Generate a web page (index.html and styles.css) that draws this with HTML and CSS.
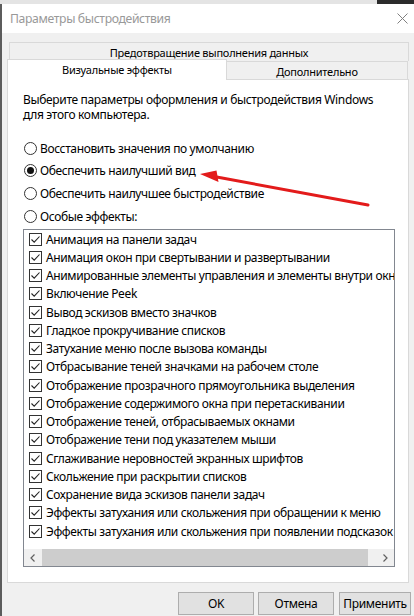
FILE: index.html
```html
<!DOCTYPE html>
<html lang="ru">
<head>
<meta charset="utf-8">
<title>Параметры быстродействия</title>
<link rel="stylesheet" href="styles.css">
</head>
<body>
<div class="screen">
  <div class="bg-strip"><span class="bg-dark"></span></div>
  <div class="window">
    <div class="titlebar">
      <span class="title">Параметры быстродействия</span>
      <svg class="close" width="11" height="11" viewBox="0 0 11 11"><path d="M0.5 0.5 L10.5 10.5 M10.5 0.5 L0.5 10.5" stroke="#808080" stroke-width="1" fill="none"/></svg>
    </div>
    <div class="content">
      <div class="tab-row back">
        <div class="tab back-tab">Предотвращение выполнения данных</div>
      </div>
      <div class="tab-row front">
        <div class="tab selected">Визуальные эффекты</div>
        <div class="tab other">Дополнительно</div>
      </div>
      <div class="panel">
        <p class="desc">Выберите параметры оформления и быстродействия Windows<br>для этого компьютера.</p>
        <div class="radios">
          <div class="radio-row"><span class="radio"></span><span>Восстановить значения по умолчанию</span></div>
          <div class="radio-row"><span class="radio on"></span><span>Обеспечить наилучший вид</span></div>
          <div class="radio-row"><span class="radio"></span><span>Обеспечить наилучшее быстродействие</span></div>
          <div class="radio-row"><span class="radio"></span><span>Особые эффекты:</span></div>
        </div>
        <div class="listbox">
          <div class="items">
            <div class="item"><span class="cb"></span><span>Анимация на панели задач</span></div>
            <div class="item"><span class="cb"></span><span>Анимация окон при свертывании и развертывании</span></div>
            <div class="item"><span class="cb"></span><span>Анимированные элементы управления и элементы внутри окна</span></div>
            <div class="item"><span class="cb"></span><span>Включение Peek</span></div>
            <div class="item"><span class="cb"></span><span>Вывод эскизов вместо значков</span></div>
            <div class="item"><span class="cb"></span><span>Гладкое прокручивание списков</span></div>
            <div class="item"><span class="cb"></span><span>Затухание меню после вызова команды</span></div>
            <div class="item"><span class="cb"></span><span>Отбрасывание теней значками на рабочем столе</span></div>
            <div class="item"><span class="cb"></span><span>Отображение прозрачного прямоугольника выделения</span></div>
            <div class="item"><span class="cb"></span><span>Отображение содержимого окна при перетаскивании</span></div>
            <div class="item"><span class="cb"></span><span>Отображение теней, отбрасываемых окнами</span></div>
            <div class="item"><span class="cb"></span><span>Отображение тени под указателем мыши</span></div>
            <div class="item"><span class="cb"></span><span>Сглаживание неровностей экранных шрифтов</span></div>
            <div class="item"><span class="cb"></span><span>Скольжение при раскрытии списков</span></div>
            <div class="item"><span class="cb"></span><span>Сохранение вида эскизов панели задач</span></div>
            <div class="item"><span class="cb"></span><span>Эффекты затухания или скольжения при обращении к меню</span></div>
            <div class="item"><span class="cb"></span><span>Эффекты затухания или скольжения при появлении подсказок</span></div>
          </div>
          <div class="hscroll">
            <span class="sbtn"><svg width="5" height="8" viewBox="0 0 5 8"><path d="M4.5 0.5 L1 4 L4.5 7.5" stroke="#606060" stroke-width="1.2" fill="none"/></svg></span>
            <span class="track"><span class="thumb"></span></span>
            <span class="sbtn"><svg width="5" height="8" viewBox="0 0 5 8"><path d="M0.5 0.5 L4 4 L0.5 7.5" stroke="#606060" stroke-width="1.2" fill="none"/></svg></span>
          </div>
        </div>
      </div>
      <div class="buttons">
        <button class="btn">OK</button>
        <button class="btn">Отмена</button>
        <button class="btn apply">Применить</button>
      </div>
    </div>
  </div>
  <svg class="arrow" width="414" height="616" viewBox="0 0 414 616">
    <line x1="368" y1="205" x2="214" y2="176.6" stroke="#e31b1b" stroke-width="3" stroke-linecap="round"/>
    <polygon points="200,174 216.5,170.5 218.5,182" fill="#e31b1b"/>
  </svg>
</div>
</body>
</html>
```
FILE: styles.css
```css
* { box-sizing: border-box; }
html, body { margin: 0; padding: 0; }
body {
  font-family: "Noto Sans", "Open Sans", sans-serif;
  font-size: 12px;
  letter-spacing: -0.37px;
  color: #000;
}
.screen {
  position: relative;
  width: 414px;
  height: 616px;
  overflow: hidden;
  background: #f0f0f0;
}
.bg-strip {
  height: 4px;
  background: #e4e4e4;
  display: flex;
  justify-content: flex-end;
}
.bg-dark { width: 37px; background: #2b2b2b; }
.window {
  height: 612px;
  border-left: 2px solid #5c5c5c;
  display: flex;
  flex-direction: column;
}
.titlebar {
  height: 29px;
  background: #fff;
  display: flex;
  align-items: center;
  justify-content: space-between;
  padding: 0 6px 0 8px;
}
.title {
  font-size: 12.2px;
  letter-spacing: -0.35px;
  color: #999;
}
.content {
  flex: 1;
  padding-top: 9px;
  display: flex;
  flex-direction: column;
}
.tab-row { display: flex; }
.tab {
  display: flex;
  align-items: center;
  justify-content: center;
  border: 1px solid #d9d9d9;
  background: #f0f0f0;
  white-space: nowrap;
  font-size: 11px;
  letter-spacing: -0.25px;
}
.back-tab {
  margin-left: 7px;
  width: 400px;
  height: 19px;
  border-bottom: none;
  padding-top: 1px;
}
.front {
  margin-top: -2px;
  height: 20px;
  align-items: flex-end;
  margin-left: 5px;
}
.selected {
  position: relative;
  z-index: 1;
  width: 220px;
  height: 21px;
  margin-bottom: -1px;
  background: #fff;
  border-bottom: none;
  padding-bottom: 2px;
}
.other {
  width: 181px;
  height: 18px;
  border-left: none;
  border-bottom: none;
  padding-top: 2px;
}
.panel {
  margin-left: 5px;
  width: 402px;
  height: 504px;
  background: #fff;
  border: 1px solid #d9d9d9;
  padding: 12px 0 0 15px;
}
.desc {
  margin: 0;
  line-height: 15px;
  letter-spacing: -0.34px;
}
.radios { margin-top: 15px; }
.radio-row {
  height: 22.65px;
  display: flex;
  align-items: center;
}
.radio {
  width: 13px;
  height: 13px;
  border: 1px solid #333;
  border-radius: 50%;
  margin: 0 3px 0 1px;
  display: flex;
  align-items: center;
  justify-content: center;
  flex: none;
}
.radio.on::after {
  content: "";
  width: 7px;
  height: 7px;
  border-radius: 50%;
  background: #111;
}
.listbox {
  margin-top: 1.5px;
  width: 372px;
  height: 338px;
  border: 1px solid #828790;
  display: flex;
  flex-direction: column;
}
.items {
  flex: 1;
  overflow: hidden;
  white-space: nowrap;
}
.item {
  height: 18.25px;
  display: flex;
  align-items: center;
  padding-left: 5px;
}
.cb {
  width: 13px;
  height: 13px;
  border: 1px solid #333;
  margin-right: 4px;
  flex: none;
  background: #fff url("data:image/svg+xml,%3Csvg xmlns='http://www.w3.org/2000/svg' width='11' height='11' viewBox='0 0 11 11'%3E%3Cpath d='M1.5 5.5 L4.2 8.2 L9.5 2.5' stroke='%23222' stroke-width='1.1' fill='none'/%3E%3C/svg%3E") center/11px 11px no-repeat;
}
.hscroll {
  height: 17px;
  background: #f0f0f0;
  display: flex;
  flex: none;
}
.sbtn {
  width: 17px;
  display: flex;
  align-items: center;
  justify-content: center;
  flex: none;
}
.track {
  flex: 1;
  display: flex;
  padding: 0 9px 0 1px;
}
.thumb {
  flex: 1;
  background: #cdcdcd;
}
.buttons {
  margin-top: 9px;
  display: flex;
  justify-content: flex-end;
  padding-right: 3px;
}
.btn {
  font-family: inherit;
  font-size: 12px;
  letter-spacing: -0.3px;
  color: #000;
  width: 76px;
  height: 23px;
  background: #e1e1e1;
  border: 1px solid #adadad;
  margin-left: 4px;
  padding: 0;
}
.btn.apply { width: 72px; margin-left: 5px; }
.arrow {
  position: absolute;
  left: 0;
  top: 0;
  pointer-events: none;
}
```
